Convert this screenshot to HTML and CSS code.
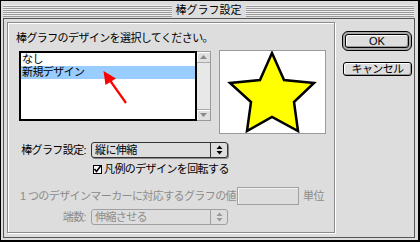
FILE: index.html
```html
<!DOCTYPE html>
<html lang="ja">
<head>
<meta charset="utf-8">
<title>棒グラフ設定</title>
<link rel="stylesheet" href="styles.css">
</head>
<body>
<div class="window">
  <div class="titlebar">
    <span class="stripes"></span>
    <span class="title">棒グラフ設定</span>
    <span class="stripes"></span>
  </div>
  <div class="content">
    <div class="group">
      <div class="prompt">棒グラフのデザインを選択してください。</div>
      <div class="top-row">
        <div class="listbox">
          <div class="list">
            <div class="item">なし</div>
            <div class="item selected">新規デザイン</div>
          </div>
          <div class="scrollbar">
            <div class="sb-arrow sb-up"><svg width="9" height="6" viewBox="0 0 9 6"><path d="M1 5 L4.5 1 L8 5 Z" fill="#8a8a8a"/></svg></div>
            <div class="sb-track"></div>
            <div class="sb-arrow sb-down"><svg width="9" height="6" viewBox="0 0 9 6"><path d="M1 1 L4.5 5 L8 1 Z" fill="#8a8a8a"/></svg></div>
          </div>
        </div>
        <div class="preview">
          <svg width="105" height="82" viewBox="219 51 105 82">
            <path d="M271 53 L283 80 L313 83 L293 102 L297 131 L271 117 L246 131 L250 102 L229 83 L259 80 Z" fill="#ffff00" stroke="#000" stroke-width="2.5" stroke-linejoin="miter"/>
          </svg>
        </div>
      </div>
      <div class="form-row">
        <span class="label">棒グラフ設定:</span>
        <div class="popup">
          <span class="popup-text">縦に伸縮</span>
          <span class="popup-arrow"><svg width="7" height="10" viewBox="0 0 7 10"><path d="M0.5 4 L3.5 0.5 L6.5 4 Z M0.5 6 L3.5 9.5 L6.5 6 Z" fill="#000"/></svg></span>
        </div>
      </div>
      <div class="check-row">
        <span class="checkbox"><svg width="9" height="9" viewBox="0 0 9 9"><path d="M1.5 4 L3.5 6.5 L8 0.5" fill="none" stroke="#000" stroke-width="1.6"/></svg></span>
        <span class="check-label">凡例のデザインを回転する</span>
      </div>
      <div class="value-row disabled">
        <span class="value-label">1 つのデザインマーカーに対応するグラフの値:</span>
        <span class="textfield"></span>
        <span class="unit">単位</span>
      </div>
      <div class="form-row disabled">
        <span class="label">端数:</span>
        <div class="popup">
          <span class="popup-text">伸縮させる</span>
          <span class="popup-arrow"><svg width="7" height="10" viewBox="0 0 7 10"><path d="M0.5 4 L3.5 0.5 L6.5 4 Z M0.5 6 L3.5 9.5 L6.5 6 Z" fill="#999"/></svg></span>
        </div>
      </div>
    </div>
    <div class="buttons">
      <div class="default-ring"><div class="btn ok">OK</div></div>
      <div class="btn cancel">キャンセル</div>
    </div>
  </div>
  <svg class="annotation" width="420" height="242" viewBox="0 0 420 242">
    <line x1="126" y1="103" x2="109" y2="79" stroke="#ff0000" stroke-width="2.2"/>
    <path d="M103.5 71 L116 78.5 L105.5 85 Z" fill="#ff0000"/>
  </svg>
</div>
</body>
</html>
```

FILE: styles.css
```css
* {
  box-sizing: border-box;
  margin: 0;
  padding: 0;
}

html, body {
  width: 420px;
  height: 242px;
  overflow: hidden;
}

body {
  font-family: "Liberation Sans", "Noto Sans CJK JP", sans-serif;
  font-size: 11px;
  letter-spacing: -0.6px;
  color: #000;
  background: #dddddd;
}

.window {
  position: relative;
  width: 420px;
  height: 242px;
  background: #dddddd;
  border: 1px solid #000;
  border-right-width: 2px;
  border-bottom-width: 2px;
  padding: 0 3px 2px 2px;
  display: flex;
  flex-direction: column;
}

.titlebar {
  height: 17px;
  display: flex;
  align-items: center;
  gap: 3px;
  padding: 0 1px 0 0;
}

.stripes {
  flex: 1;
  height: 12px;
  margin-top: 2px;
  background: repeating-linear-gradient(to bottom, #eeeeee 0 1px, #9a9a9a 1px 2px);
}

.title {
  font-size: 11px;
  letter-spacing: 0;
  line-height: 17px;
  padding: 2px 1px 0;
}

.content {
  flex: 1;
  display: flex;
  border: 1px solid #555;
  padding: 3px 0 0 3px;
}

.group {
  width: 328px;
  height: 211px;
  border: 1px solid #8a8a8a;
  box-shadow: 1px 1px 0 #ffffff, inset 1px 1px 0 #ffffff;
  padding: 8px 0 0 8px;
  display: flex;
  flex-direction: column;
}

.prompt {
  line-height: 14px;
  height: 14px;
  white-space: nowrap;
}

.top-row {
  display: flex;
  align-items: flex-start;
  margin: 5px 0 0 3px;
}

.listbox {
  display: flex;
  margin-top: 1px;
  height: 70px;
}

.list {
  width: 178px;
  height: 70px;
  background: #fff;
  border: 2px solid #000;
}

.item {
  height: 13px;
  line-height: 13px;
  padding-left: 1px;
  white-space: nowrap;
}

.item.selected {
  background: #99ccff;
}

.scrollbar {
  width: 14px;
  height: 70px;
  border: 1px solid #999;
  border-left: none;
  display: flex;
  flex-direction: column;
  background: #e6e6e6;
}

.sb-arrow {
  height: 11px;
  display: flex;
  align-items: center;
  justify-content: center;
  background: #e0e0e0;
  box-shadow: inset 1px 1px 0 #fff;
}

.sb-up {
  border-bottom: 1px solid #aaa;
}

.sb-down {
  border-top: 1px solid #aaa;
}

.sb-track {
  flex: 1;
  background: #e8e8e8;
}

.preview {
  width: 107px;
  height: 84px;
  margin-left: 8px;
  background: #fff;
  border: 1px solid #9a9a9a;
  display: flex;
}

.preview svg {
  display: block;
}

.form-row {
  display: flex;
  align-items: center;
  height: 16px;
  margin-top: 8px;
}

.label {
  width: 70px;
  text-align: right;
  line-height: 14px;
  white-space: nowrap;
}

.popup {
  width: 137px;
  height: 16px;
  margin-left: 5px;
  border: 1px solid #333;
  border-radius: 3px;
  box-shadow: 1px 1px 0 #888;
  display: flex;
  background: #dddddd;
}

.popup-text {
  flex: 1;
  line-height: 14px;
  padding-left: 3px;
  white-space: nowrap;
}

.popup-arrow {
  width: 17px;
  border-left: 1px solid #333;
  display: flex;
  align-items: center;
  justify-content: center;
}

.popup-arrow svg {
  display: block;
}

.check-row {
  display: flex;
  align-items: center;
  height: 14px;
  margin: 4px 0 0 77px;
}

.checkbox {
  width: 9px;
  height: 9px;
  border: 1px solid #000;
  background: #fff;
  display: flex;
  overflow: visible;
}

.checkbox svg {
  display: block;
  margin: -1px 0 0 -1px;
  overflow: visible;
}

.check-label {
  margin-left: 2px;
  line-height: 14px;
  white-space: nowrap;
}

.value-row {
  display: flex;
  align-items: center;
  height: 18px;
  margin: 11px 0 0 4px;
}

.value-label {
  line-height: 14px;
  white-space: nowrap;
  width: 217px;
}

.textfield {
  width: 62px;
  height: 18px;
  border: 1px solid #a0a0a0;
  box-shadow: inset 1px 1px 0 #f2f2f2;
}

.unit {
  margin-left: 4px;
  line-height: 14px;
}

.disabled {
  color: #8c8c8c;
}

.form-row.disabled {
  margin-top: 4px;
}

.disabled .popup {
  border-color: #a0a0a0;
  box-shadow: none;
}

.disabled .popup-arrow {
  border-left-color: #a0a0a0;
}

.buttons {
  display: flex;
  flex-direction: column;
  align-items: flex-start;
  margin-left: 7px;
  padding-top: 9px;
}

.default-ring {
  width: 70px;
  height: 20px;
  border: 1px solid #000;
  border-radius: 6px;
  padding: 2px;
  background: #a8a8a8;
}

.btn {
  height: 14px;
  border: 1px solid #000;
  border-radius: 3px;
  background: #dddddd;
  box-shadow: inset 1px 1px 0 #fff, inset -1px -1px 0 #999;
  text-align: center;
  line-height: 12px;
  font-size: 11px;
  white-space: nowrap;
}

.ok {
  width: 64px;
  letter-spacing: 0;
}

.cancel {
  width: 69px;
  margin: 11px 0 0 1px;
}

.annotation {
  position: absolute;
  left: -1px;
  top: -1px;
  pointer-events: none;
}
```
